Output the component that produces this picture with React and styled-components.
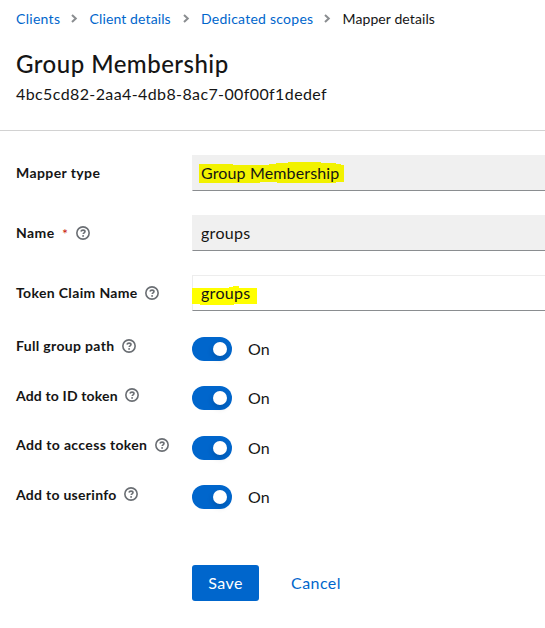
import React from "react";
import styled, { createGlobalStyle } from "styled-components";

const GlobalStyle = createGlobalStyle`
  * { box-sizing: border-box; }
  body {
    margin: 0;
    background: #fff;
    color: #151515;
    font-family: "Lato", sans-serif;
    font-size: 16px;
    overflow: hidden;
  }
`;

const Page = styled.main`
  height: 628px;
  overflow: hidden;
`;

const Header = styled.header`
  height: 131px;
  padding: 8px 16px 0;
  border-bottom: 1px solid #d2d2d2;
`;

const Breadcrumb = styled.nav`
  display: flex;
  align-items: center;
  height: 21px;
  font-size: 14px;
  line-height: 21px;
  white-space: nowrap;
`;

const Crumb = styled.a`
  width: ${(p) => p.$width}px;
  flex: none;
  color: ${(p) => (p.$current ? "#151515" : "#0066cc")};
  letter-spacing: ${(p) => p.$spacing}px;
`;

const Separator = styled.span`
  display: flex;
  flex: none;
  justify-content: center;
  width: 30px;
  padding-bottom: 1px;
  color: #8a8d90;
`;

const Title = styled.h1`
  margin: 19px 0 0;
  font-size: 24px;
  font-weight: 500;
  line-height: 32px;
  letter-spacing: 0.48px;
`;

const Identifier = styled.p`
  margin: 2px 0 0;
  line-height: 24px;
  letter-spacing: 0.39px;
`;

const Form = styled.form`
  padding: 24px 0 0 16px;
`;

const Group = styled.div`
  display: grid;
  grid-template-columns: 176px 1fr;
  height: 36px;
  margin-bottom: 24px;
`;

const SwitchGroup = styled(Group)`
  height: 24px;
  margin-bottom: ${(p) => p.$gap}px;
  &:first-of-type { margin-top: 26px; }
`;

const Label = styled.label`
  display: flex;
  align-items: center;
  align-self: start;
  height: ${(p) => (p.$compact ? 18 : 36)}px;
  color: #151515;
  font-size: 14px;
  font-weight: 700;
  white-space: nowrap;
`;

const LabelText = styled.span`
  width: ${(p) => p.$width}px;
  padding-bottom: ${(p) => p.$lift ?? 2}px;
  letter-spacing: ${(p) => p.$spacing}px;
`;

const Required = styled.span`
  width: 6px;
  color: #c9190b;
  font-weight: 400;
`;

const HelpButton = styled.span`
  display: flex;
  margin-left: 8px;
  color: #6a6e73;
`;

const Field = styled.div`
  position: relative;
  height: 36px;
  padding: 0 8px;
  border: 1px solid ${(p) => (p.$disabled ? "#f0f0f0" : "#ededed")};
  border-right: 0;
  border-bottom-color: #8a8d90;
  background: ${(p) => (p.$disabled ? "#f0f0f0" : "#fff")};
  line-height: 33px;
`;

const Value = styled.span`
  position: relative;
  letter-spacing: ${(p) => p.$spacing}px;
`;

const Marker = styled.svg`
  position: absolute;
  left: -1px;
  top: -1px;
  fill: ${(p) => (p.$onGray ? "#f2f200" : "#ffff00")};
`;

const SwitchRow = styled.div`
  display: flex;
  align-items: center;
  gap: 16px;
`;

const State = styled.span`
  padding-bottom: 2px;
`;

const Toggle = styled.span`
  display: flex;
  align-items: center;
  justify-content: flex-end;
  width: 40px;
  height: 24px;
  padding-right: 5px;
  border-radius: 12px;
  background: #0066cc;
`;

const Thumb = styled.span`
  width: 14px;
  height: 14px;
  border-radius: 50%;
  background: #fff;
  box-shadow: 0 3px 6px rgba(3, 3, 3, 0.16);
`;

const Actions = styled.div`
  display: flex;
  gap: 16px;
  padding: 56px 0 0 176px;
`;

const Button = styled.button`
  width: ${(p) => (p.$primary ? 67 : 82)}px;
  height: 36px;
  padding: 0;
  border: 0;
  border-radius: 3px;
  background: ${(p) => (p.$primary ? "#0066cc" : "transparent")};
  color: ${(p) => (p.$primary ? "#fff" : "#0066cc")};
  font: 400 16px/36px "Lato", sans-serif;
  letter-spacing: 0.45px;
`;

const crumbs = [
  { text: "Clients", width: 43.5, spacing: 0.3 },
  { text: "Client details", width: 81.5, spacing: 0.12 },
  { text: "Dedicated scopes", width: 111.5, spacing: 0.25 },
  { text: "Mapper details", width: 94, spacing: 0.1 },
];

const switches = [
  { text: "Full group path", width: 98, spacing: 0.33, gap: 25, lift: 2 },
  { text: "Add to ID token", width: 101, spacing: 0.16, gap: 26, lift: 0 },
  { text: "Add to access token", width: 131, spacing: 0.35, gap: 25, lift: 2 },
  { text: "Add to userinfo", width: 100, spacing: 0.28, gap: 0, lift: 0 },
];

const Chevron = () => (
  <svg width="7" height="9" viewBox="0 0 7 9" fill="none" stroke="currentColor" strokeWidth="2" aria-hidden="true">
    <path d="M1 0.9L4.8 4.5L1 8.1" />
  </svg>
);

const Help = () => (
  <HelpButton>
    <svg width="14" height="14" viewBox="0 0 14 14" fill="none" stroke="currentColor" aria-hidden="true">
      <circle cx="7" cy="7" r="6.15" strokeWidth="1.6" />
      <path d="M4.9 5.5C5.2 4.6 6 4.1 7 4.1C8.1 4.1 9 4.7 9 5.6C9 6.8 7.2 6.8 7.2 8.1" strokeWidth="1.6" />
      <circle cx="7.1" cy="9.9" r="0.95" fill="currentColor" stroke="none" />
    </svg>
  </HelpButton>
);

export default function App() {
  return (
    <Page>
      <GlobalStyle />
      <Header>
        <Breadcrumb>
          {crumbs.map((c, i) => (
            <React.Fragment key={c.text}>
              {i > 0 && (
                <Separator>
                  <Chevron />
                </Separator>
              )}
              <Crumb $width={c.width} $spacing={c.spacing} $current={i === 3}>
                {c.text}
              </Crumb>
            </React.Fragment>
          ))}
        </Breadcrumb>
        <Title>Group Membership</Title>
        <Identifier>4bc5cd82-2aa4-4db8-8ac7-00f00f1dedef</Identifier>
      </Header>
      <Form>
        <Group>
          <Label>
            <LabelText $width={85} $spacing={0.4}>Mapper type</LabelText>
          </Label>
          <Field $disabled>
            <Marker $onGray width="160" height="36" aria-hidden="true">
              <path d="M7 9H41V10H77V9H84V8H96V7H129V8H144V9H149V10H152V27H144V28H85V27H68V28H7Z" />
            </Marker>
            <Value $spacing={0.14}>Group Membership</Value>
          </Field>
        </Group>
        <Group>
          <Label>
            <LabelText $width={46} $spacing={0.45}>Name</LabelText>
            <Required>*</Required>
            <Help />
          </Label>
          <Field $disabled>
            <Value $spacing={0.3}>groups</Value>
          </Field>
        </Group>
        <Group>
          <Label>
            <LabelText $width={121} $spacing={0.35}>Token Claim Name</LabelText>
            <Help />
          </Label>
          <Field>
            <Marker width="70" height="36" aria-hidden="true">
              <path d="M0 13H37V12H41V11H47V13H65V29H42V30H8V29H0Z" />
            </Marker>
            <Value $spacing={0.3}>groups</Value>
          </Field>
        </Group>
        <div>
          {switches.map((s) => (
            <SwitchGroup key={s.text} $gap={s.gap}>
              <Label $compact>
                <LabelText $width={s.width} $spacing={s.spacing} $lift={s.lift}>{s.text}</LabelText>
                <Help />
              </Label>
              <SwitchRow>
                <Toggle role="switch" aria-checked="true">
                  <Thumb />
                </Toggle>
                <State>On</State>
              </SwitchRow>
            </SwitchGroup>
          ))}
        </div>
        <Actions>
          <Button type="button" $primary>Save</Button>
          <Button type="button">Cancel</Button>
        </Actions>
      </Form>
    </Page>
  );
}
